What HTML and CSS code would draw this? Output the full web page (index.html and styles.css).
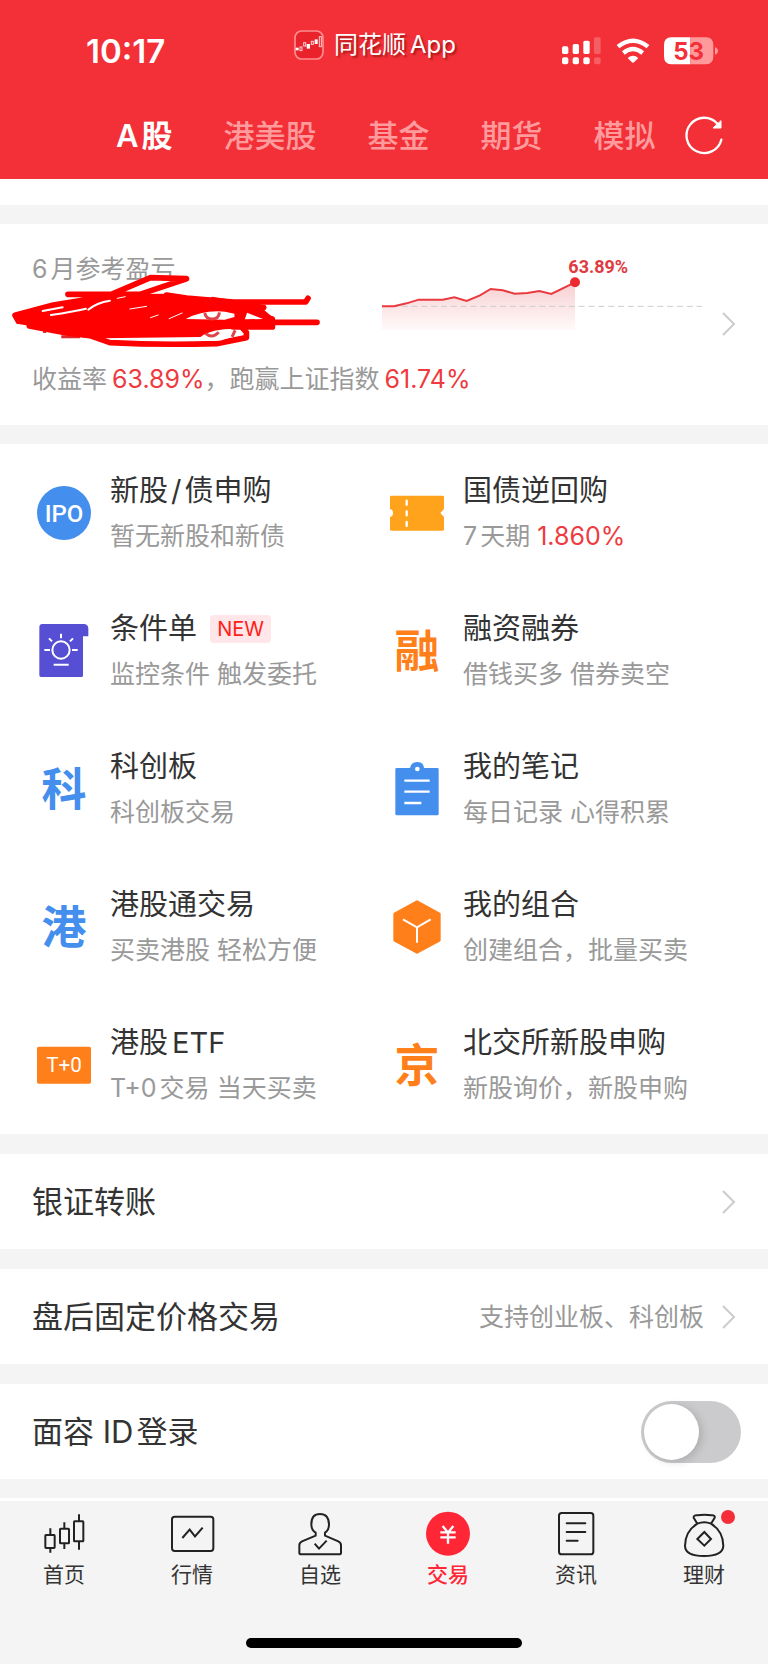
FILE: index.html
```html
<!DOCTYPE html>
<html lang="zh-CN">
<head>
<meta charset="utf-8">
<meta name="viewport" content="width=device-width, initial-scale=1">
<title>同花顺 交易</title>
<link rel="stylesheet" href="styles.css">
</head>
<body>
<header class="header">
  <div class="status">
    <span class="status-time">10:17</span>
    <span class="status-app">
      <svg width="30" height="30" viewBox="0 0 90 90" aria-hidden="true">
        <rect x="3" y="3" width="84" height="84" rx="20" fill="#e9222b" stroke="#ff8d90" stroke-width="5"/>
        <g fill="#fff"><rect x="5" y="53" width="9" height="8"/><rect x="38" y="42" width="10" height="14"/><rect x="62" y="28" width="9" height="14"/></g>
        <g fill="none" stroke="#ffd0d1" stroke-width="3"><rect x="18" y="51" width="6" height="11"/><rect x="29" y="38" width="6" height="10"/><rect x="52" y="34" width="6" height="9"/><rect x="76" y="20" width="6" height="30"/></g>
      </svg>
      <span>同花顺<span class="latin">App</span></span>
    </span>
    <span class="status-icons">
      <svg width="40" height="28" viewBox="534 110 120 84" aria-label="信号">
        <g fill="#fff"><rect x="534" y="138" width="19" height="23" rx="5"/><rect x="566" y="131" width="19" height="30" rx="5"/><rect x="598" y="121" width="19" height="40" rx="5"/><rect x="534" y="171" width="19" height="21" rx="6"/><rect x="566" y="171" width="19" height="21" rx="6"/><rect x="598" y="171" width="19" height="21" rx="6"/></g>
        <g fill="#fff" opacity=".22"><rect x="630" y="111" width="20" height="50" rx="5"/><rect x="630" y="171" width="20" height="21" rx="6"/></g>
      </svg>
      <svg width="34" height="28" viewBox="692 110 102 84" aria-label="无线网络">
        <g fill="none" stroke="#fff" stroke-width="13"><path d="M698 139Q743 103 788 139"/><path d="M714 158Q743 134 772 158"/></g>
        <path fill="#fff" d="M727 173Q743 159 759 173L747 185Q743 189 739 185Z"/>
      </svg>
      <svg width="54" height="28" viewBox="836 110 162 84" aria-label="电量 53">
        <path fill="#fff" d="M858 111H915V192H858Q836 192 836 168V135Q836 111 858 111Z"/>
        <path fill="#ff9a9c" d="M915 111H962Q984 111 984 135V168Q984 192 962 192H915ZM989 141Q998 144 998 152T989 163Z"/>
        <text x="910" y="178" text-anchor="middle" class="battery-text">53</text>
      </svg>
    </span>
  </div>
  <div class="tab-bar">
    <nav class="tabs" aria-label="市场">
      <button class="tab tab-active" type="button">A<span class="after-latin">股</span></button>
      <button class="tab" type="button">港美股</button>
      <button class="tab" type="button">基金</button>
      <button class="tab" type="button">期货</button>
      <button class="tab" type="button">模拟</button>
    </nav>
    <button class="refresh" type="button" aria-label="刷新">
      <svg width="38" height="40" viewBox="900 346 114 120"><path d="M1009 417A53 53 0 1 1 998 370" fill="none" stroke="#fff" stroke-width="7" stroke-linecap="round"/><path d="M1008 360V382H984Z" fill="#fff" stroke="#fff" stroke-width="3"/></svg>
    </button>
  </div>
</header>

<main>
  <div class="strip"></div>
  <a class="profit" href="#profit">
    <span class="profit-body">
      <span class="profit-top">
        <span class="profit-label">6<span class="after-latin">月参考盈亏</span></span>
        <svg class="chart" width="320" height="75" viewBox="36 78 960 225" role="img" aria-label="收益走势">
          <defs><linearGradient id="fade" x1="0" y1="0" x2="0" y2="1"><stop offset="0" stop-color="#f8cfd1"/><stop offset="1" stop-color="#fffafa"/></linearGradient></defs>
          <path d="M36 229H72L110 220 146 209H218L253 202 290 213 330 196 362 177 398 181 434 191 472 189 508 183 544 192 615 157V300H36Z" fill="url(#fade)"/>
          <path d="M36 229H996" stroke="#ccc" stroke-width="3" stroke-dasharray="18 11.5"/>
          <path d="M36 229H72L110 220 146 209H218L253 202 290 213 330 196 362 177 398 181 434 191 472 189 508 183 544 192 615 157" fill="none" stroke="#e93a40" stroke-width="6"/>
          <circle cx="615" cy="157" r="15" fill="#eb2b32"/>
          <text x="595" y="128" class="chart-text">63.89%</text>
        </svg>
      </span>
      <span class="profit-rate">收益率<span class="num">63.89%</span>，跑赢上证指数<span class="num">61.74%</span></span>
    </span>
    <svg class="chevron" width="14" height="24" viewBox="0 0 14 24"><path d="M1 1L12 12 1 23"/></svg>
    <svg class="scribble" width="313" height="75" viewBox="30 130 940 225" aria-hidden="true">
      <path d="M184 321H240M134 298V310" fill="none" stroke="#e0262b" stroke-width="9"/>
      <path fill="#f00" d="M40 255Q160 226 340 194L500 192 640 208 700 222 780 230 825 268V298H740Q640 292 602 322L300 326Q200 318 150 298L50 282Z"/>
      <g fill="none" stroke="#f00" stroke-width="17" stroke-linecap="round" stroke-linejoin="round">
        <path d="M204 194H420L560 147 452 144 320 200 160 226 45 257 55 274H150L88 289 200 310 270 318 330 339Q480 347 650 342L740 324V308L724 290"/>
        <path d="M500 196L560 205 700 217H918L925 206"/><path d="M780 278H952M640 210L792 234M700 240L818 268V292H700"/>
      </g>
      <g fill="none" stroke="#fff" stroke-linecap="round"><path d="M128 244L188 233M153 256Q220 246 258 237" stroke-width="6"/><path d="M265 240Q290 219 330 213" stroke-width="6"/><path d="M352 206L376 201M390 238L440 230M508 267L547 250M452 264L475 256" stroke-width="3"/></g>
      <path fill="#fff" d="M558 268Q610 240 676 246L704 252V262L675 270ZM742 249L790 268 735 269ZM610 322Q650 305 700 300L694 323 660 333H500L600 328Z"/>
      <g fill="none" stroke="#e0444a" stroke-width="9"><path d="M615 250Q618 268 637 268 657 268 659 248M618 312Q637 328 657 308M706 302L697 322"/></g>
      <path d="M350 329H600" stroke="#fff" stroke-width="4"/>
    </svg>
  </a>

  <section class="services" aria-label="交易服务">
    <a class="service" href="#ipo"><svg class="icon" viewBox="0 0 162 162"><circle cx="81" cy="81" r="81" fill="#448eee"/><text x="81" y="107" text-anchor="middle" class="ipo-text">IPO</text></svg>
      <span class="copy"><span class="title">新股<span class="slash">/</span>债申购</span><span class="sub">暂无新股和新债</span></span></a>
    <a class="service" href="#repo"><svg class="icon" viewBox="0 0 162 162"><path d="M4 29H158Q162 29 162 33V69L151 81 162 93V130Q162 134 158 134H4Q0 134 0 130V93Q9 91 9 81T0 69V33Q0 29 4 29Z" fill="#ffa31c"/><path d="M50 44V56M50 76V88M50 108V120" stroke="#fff" stroke-width="7" stroke-linecap="round"/></svg>
      <span class="copy"><span class="title">国债逆回购</span><span class="sub">7<span class="after-latin">天期</span> <span class="rate">1.860%</span></span></span></a>
    <a class="service" href="#condition"><svg class="icon" viewBox="0 0 162 162"><path d="M15 0H142Q154 2 154 14V37H138V155Q138 159 133 159H12Q7 159 7 154V8Q7 1 15 0Z" fill="#574fd3"/><g fill="none" stroke="#fff" stroke-width="6"><circle cx="72" cy="78" r="26"/><path d="M72 29V43M36 43L45 52M108 43L99 52M22 78H39M105 78H122M50 122H95"/></g></svg>
      <span class="copy"><span class="title">条件单 <span class="new">NEW</span></span><span class="sub">监控条件 触发委托</span></span></a>
    <a class="service" href="#margin"><span class="icon glyph orange">融</span>
      <span class="copy"><span class="title">融资融券</span><span class="sub">借钱买多 借券卖空</span></span></a>
    <a class="service" href="#star"><span class="icon glyph blue">科</span>
      <span class="copy"><span class="title">科创板</span><span class="sub">科创板交易</span></span></a>
    <a class="service" href="#notes"><svg class="icon" viewBox="0 0 162 162"><path fill-rule="evenodd" d="M20 18H60Q63 0 82 0T102 18H142Q146 18 146 22V156Q146 160 142 160H20Q16 160 16 156V22Q16 18 20 18ZM82 14A7 7 0 1 0 82 28A7 7 0 1 0 82 14Z" fill="#448eee"/><path d="M43 56H119M43 89H119M43 123H94" stroke="#fff" stroke-width="7"/></svg>
      <span class="copy"><span class="title">我的笔记</span><span class="sub">每日记录 心得积累</span></span></a>
    <a class="service" href="#connect"><span class="icon glyph blue">港</span>
      <span class="copy"><span class="title">港股通交易</span><span class="sub">买卖港股 轻松方便</span></span></a>
    <a class="service" href="#portfolio"><svg class="icon" viewBox="0 0 162 162"><path d="M81 5L148 42V121L81 157 14 121V42Z" fill="#ff7f1a" stroke="#ff7f1a" stroke-width="8" stroke-linejoin="round"/><path d="M39 58L81 82 122 58M81 82V128" fill="none" stroke="#fff" stroke-width="6"/></svg>
      <span class="copy"><span class="title">我的组合</span><span class="sub">创建组合，批量买卖</span></span></a>
    <a class="service" href="#etf"><svg class="icon" viewBox="0 0 162 162"><rect y="26" width="162" height="111" rx="5" fill="#ff7f1a"/><text x="81" y="103" text-anchor="middle" class="t0-text">T+0</text></svg>
      <span class="copy"><span class="title">港股<span class="latin">ETF</span></span><span class="sub">T+0<span class="after-latin">交易</span> 当天买卖</span></span></a>
    <a class="service" href="#bse"><span class="icon glyph orange">京</span>
      <span class="copy"><span class="title">北交所新股申购</span><span class="sub">新股询价，新股申购</span></span></a>
  </section>

  <a class="row" href="#transfer"><span class="row-name">银证转账</span><svg class="chevron" width="14" height="24" viewBox="0 0 14 24"><path d="M1 1L12 12 1 23"/></svg></a>
  <a class="row" href="#after-hours"><span class="row-name">盘后固定价格交易</span><span class="row-note">支持创业板、科创板</span><svg class="chevron" width="14" height="24" viewBox="0 0 14 24"><path d="M1 1L12 12 1 23"/></svg></a>
  <div class="row row-switch"><label class="row-name" for="face-id">面容 ID<span class="after-latin">登录</span></label><input class="switch" id="face-id" type="checkbox" role="switch"></div>
</main>

<footer class="footer">
  <nav class="bottom" aria-label="主导航">
    <a class="bottom-item" href="#home"><svg width="46" height="48" viewBox="123 87 138 144"><g fill="none" stroke="#222" stroke-width="6"><rect x="136" y="165" width="28" height="39" rx="2"/><rect x="180" y="146" width="27" height="44" rx="2"/><rect x="222" y="124" width="28" height="60" rx="2"/><path d="M151 145V165M151 204V218M193 127V146M193 190V207M237 103V124M237 184V209"/></g></svg><span>首页</span></a>
    <a class="bottom-item" href="#quotes"><svg width="46" height="48" viewBox="507 87 138 144"><g fill="none" stroke="#222" stroke-width="6" stroke-linejoin="round"><rect x="516" y="110" width="124" height="103" rx="8"/><path d="M547 174L569 149 585 169 608 143" stroke-linejoin="miter"/></g></svg><span>行情</span></a>
    <a class="bottom-item" href="#watch"><svg width="46" height="48" viewBox="893 87 138 144"><g fill="none" stroke="#222" stroke-width="6" stroke-linejoin="round"><path d="M949 158Q936 151 936 133Q936 102 962 102T989 133Q989 151 977 158V167L1017 184Q1025 188 1025 196V218Q1025 223 1019 223H906Q900 223 900 218V196Q900 188 908 184L949 167Z"/><path d="M946 191L959 206 982 182"/></g></svg><span>自选</span></a>
    <a class="bottom-item bottom-active" href="#trade"><svg width="46" height="48" viewBox="125 87 138 144"><circle cx="194" cy="161" r="66" fill="#ff2636"/><path d="M178 138L194 158 210 138M171 157H217M171 172H217M194 158V191" fill="none" stroke="#fff" stroke-width="7"/></svg><span>交易</span></a>
    <a class="bottom-item" href="#news"><svg width="46" height="48" viewBox="509 87 138 144"><g fill="none" stroke="#222" stroke-width="6" stroke-linecap="round"><rect x="527" y="99" width="103" height="124" rx="8"/><path d="M550 130H606M550 156H606M550 182H583"/></g></svg><span>资讯</span></a>
    <a class="bottom-item" href="#wealth"><span class="badge-wrap"><svg width="46" height="48" viewBox="893 87 138 144"><g fill="none" stroke="#222" stroke-width="6" stroke-linejoin="round"><path d="M942 131L931 113Q930 105 942 106Q964 102 984 106Q996 105 994 113L983 131Q963 122 942 131Q905 154 905 198Q906 228 962 228T1020 198Q1020 154 983 131"/><path d="M963 156L983 177 963 197 942 177Z" stroke-linejoin="miter"/></g></svg><i class="badge"></i></span><span>理财</span></a>
  </nav>
  <div class="home-bar"></div>
</footer>
</body>
</html>
```

FILE: styles.css
```css
* { box-sizing: border-box; }
body {
  margin: 0;
  background: #f4f4f4;
  color: #333;
  font-family: Inter, "Noto Sans CJK SC", sans-serif;
}
a { color: inherit; text-decoration: none; }
button { padding: 0; border: 0; background: none; font: inherit; color: inherit; }
svg { display: block; flex: none; }
.latin { margin-left: 4px; }
.after-latin { margin-left: 3px; }

.header { background: #f33037; color: #fff; }
.status { display: flex; align-items: center; height: 102px; padding: 0 50px 0 86px; }
.status-time { flex: 0 0 208px; font-size: 33px; font-weight: 600; }
.status-app {
  display: flex;
  align-items: center;
  gap: 10px;
  padding-bottom: 13px;
  font-size: 24px;
  line-height: 32px;
  text-shadow: 2px 2px 2px rgba(90, 0, 0, .5);
}
.status-icons { display: flex; gap: 14px; margin-left: auto; }
.battery-text { font: 700 72px Inter, sans-serif; fill: #f33037; }
.tab-bar {
  display: flex;
  align-items: center;
  justify-content: space-between;
  height: 77px;
  padding: 0 45px 10px 116px;
}
.tabs { display: flex; gap: 51px; }
.tab { font-size: 31px; line-height: 44px; font-weight: 500; color: #ff9a9d; white-space: nowrap; }
.tab-active { color: #fff; font-weight: 600; }

.strip { height: 26px; background: #fff; }
.profit {
  position: relative;
  display: flex;
  align-items: center;
  gap: 20px;
  margin-top: 19px;
  padding: 28px 32px 29px;
  background: #fff;
  color: #999;
  font-size: 25px;
  line-height: 34px;
}
.profit-body { flex: 1; }
.profit-top { display: flex; justify-content: space-between; height: 110px; }
.profit-rate { display: block; }
.chart { margin-top: 4px; }
.chart-text { font: 700 54px Roboto, sans-serif; fill: #e2393f; }
.num { margin-left: 5px; color: #ee3a40; }
.chevron path { fill: none; stroke: #ccc; stroke-width: 2; }
.scribble { position: absolute; left: 10px; top: 49px; }

.services {
  display: grid;
  grid-template-columns: 1fr 1fr;
  grid-auto-rows: 138px;
  margin-top: 19px;
  padding: 0 25px 0 37px;
  background: #fff;
}
.service { display: flex; align-items: center; gap: 19px; }
.icon { flex: none; width: 54px; height: 54px; }
.glyph { font-size: 45px; font-weight: 700; line-height: 56px; text-align: center; }
.blue { color: #448eee; }
.orange { color: #ff7f1a; }
.ipo-text { font: 500 72px Roboto, sans-serif; fill: #fff; }
.t0-text { font: 400 62px Roboto, sans-serif; fill: #fff; }
.copy { display: flex; flex-direction: column; gap: 7px; padding-top: 1px; }
.title { font-size: 29px; line-height: 38px; }
.slash { margin: 0 3px; }
.sub { font-size: 25px; line-height: 38px; color: #999; }
.rate { color: #ee3a40; }
.new {
  display: inline-block;
  margin-left: 5px;
  padding: 0 7px;
  border-radius: 4px;
  background: #ffe6e8;
  color: #ff2018;
  font-size: 20px;
  line-height: 28px;
  vertical-align: 3px;
}

.row {
  display: flex;
  align-items: center;
  gap: 18px;
  height: 95px;
  margin-top: 20px;
  padding: 0 32px;
  background: #fff;
  font-size: 31px;
}
.row-name { margin-right: auto; padding-bottom: 4px; }
.row-note { padding-bottom: 3px; font-size: 25px; color: #999; }
.row-switch { padding-right: 27px; }
.switch {
  appearance: none;
  width: 100px;
  height: 62px;
  margin: 0;
  padding: 3px;
  border-radius: 31px;
  background: #cbcbcd;
}
.switch::before {
  content: "";
  display: block;
  width: 55px;
  height: 56px;
  border-radius: 50%;
  background: #fff;
  box-shadow: 3px 2px 8px rgba(0, 0, 0, .15);
}
.switch:checked { background: #f33037; }
.switch:checked::before { margin-left: auto; }

.footer { margin-top: 19px; padding-bottom: 15px; border-top: 3px solid #fff; }
.bottom { display: grid; grid-template-columns: repeat(6, 1fr); padding-top: 8px; color: #333; }
.bottom-item { display: flex; flex-direction: column; align-items: center; gap: 4px; font-size: 21px; line-height: 28px; }
.bottom-active { color: #ff2636; font-weight: 500; }
.badge-wrap { position: relative; }
.badge { position: absolute; top: 1px; right: -8px; width: 14px; height: 14px; border-radius: 50%; background: #f52d38; }
.home-bar { width: 36%; height: 10px; margin: 49px auto 0; border-radius: 5px; background: #000; }
```
